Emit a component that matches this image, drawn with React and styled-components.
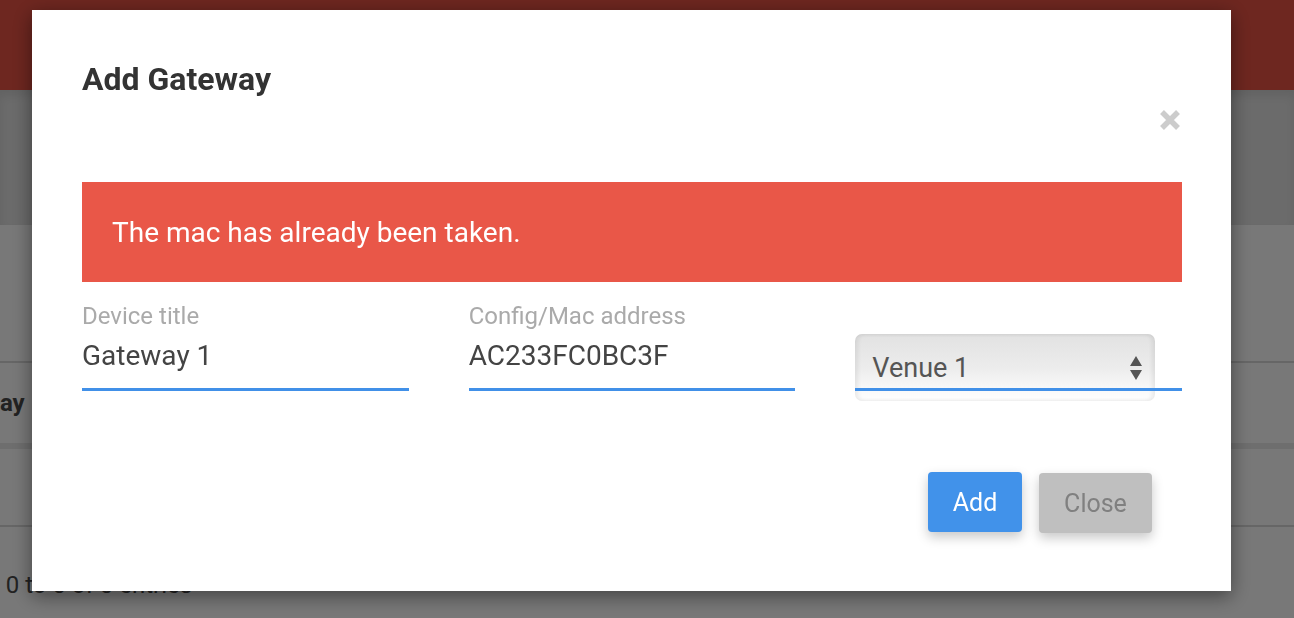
import React from 'react';
import styled, { createGlobalStyle } from 'styled-components';

const Global = createGlobalStyle`
  html, body { margin: 0; padding: 0; }
  body {
    font-family: Roboto, "Liberation Sans", sans-serif;
    background: #f0f0f0;
    width: 1294px;
    height: 618px;
    overflow: hidden;
  }
  * { box-sizing: border-box; }
`;

const Page = styled.div`
  display: flex;
  flex-direction: column;
  height: 618px;
  overflow: hidden;
`;

const Header = styled.header`
  height: 90px;
  flex-shrink: 0;
  background: #dc4e40;
`;

const Toolbar = styled.section`
  height: 135px;
  flex-shrink: 0;
  background: #d6d6d6;
  box-shadow: inset 0 6px 8px rgba(0, 0, 0, 0.08);
`;

const Table = styled.div`
  margin-top: 136px;
  display: flex;
  flex-direction: column;
`;

const HeadRow = styled.div`
  height: 88px;
  border-top: 2px solid #cdcdcd;
  border-bottom: 6px solid #dcdcdc;
  display: flex;
  align-items: center;
  font-size: 24px;
  font-weight: 700;
  color: #444;
`;

const HeadCell = styled.span`
  margin-left: ${p => p.$indent}px;
`;

const BodyRow = styled.div`
  height: 78px;
  border-bottom: 2px solid #cdcdcd;
`;

const Info = styled.div`
  margin-top: 44px;
  margin-left: ${p => p.$indent}px;
  font-size: 24px;
  line-height: 28px;
  color: #444;
`;

const Backdrop = styled.div`
  position: fixed;
  inset: 0;
  background: rgba(0, 0, 0, 0.5);
`;

const Modal = styled.div`
  position: fixed;
  left: 32px;
  top: 10px;
  width: 1199px;
  height: 581px;
  background: #fff;
  box-shadow: 0 5px 18px rgba(0, 0, 0, 0.45);
  padding: 0 49px 0 50px;
  display: flex;
  flex-direction: column;
`;

const ModalHeader = styled.div`
  height: 172px;
  display: flex;
  justify-content: space-between;
  align-items: flex-start;
`;

const Title = styled.h2`
  margin: 51px 0 0;
  font-size: 32px;
  line-height: 37px;
  font-weight: 700;
  color: #333;
`;

const CloseX = styled.button`
  margin: 99px 1px 0 0;
  width: 22px;
  height: 22px;
  padding: 0;
  border: none;
  background: none;
  color: #cccccc;
  display: flex;
  align-items: center;
  justify-content: center;
`;

const Alert = styled.div`
  height: 100px;
  background: #e95748;
  color: #fff;
  font-size: 28px;
  padding-left: 30px;
  display: flex;
  align-items: center;
`;

const Fields = styled.div`
  display: grid;
  grid-template-columns: repeat(3, 1fr);
  column-gap: 60px;
`;

const Field = styled.div`
  display: flex;
  flex-direction: column;
  padding-top: 20px;
`;

const Label = styled.label`
  font-size: 24px;
  line-height: 28px;
  color: #aaaaaa;
`;

const Input = styled.input`
  height: 61px;
  width: 100%;
  border: none;
  border-bottom: 3px solid #4190e8;
  padding: 0 0 7px;
  background: transparent;
  outline: none;
  font-family: Roboto, "Liberation Sans", sans-serif;
  font-size: 28px;
  color: #444;
`;

const SelectField = styled.div`
  position: relative;
  padding-top: 52px;
  &::after {
    content: '';
    position: absolute;
    left: 0;
    right: 0;
    top: 106px;
    height: 3px;
    background: #4190e8;
  }
`;

const SelectBox = styled.div`
  width: 300px;
  height: 67px;
  border-radius: 7px;
  background: linear-gradient(#e2e2e2 0%, #ececec 50%, #f4f4f4 70%, #ffffff 100%);
  box-shadow: inset 3px 0 4px rgba(0, 0, 0, 0.07), inset -3px 0 4px rgba(0, 0, 0, 0.07);
  display: flex;
  align-items: center;
  justify-content: space-between;
  padding: 0 12px 0 17px;
  font-size: 27px;
  color: #555;
`;

const Actions = styled.div`
  display: flex;
  justify-content: flex-end;
  align-items: flex-start;
  gap: 17px;
  margin-top: 71px;
  padding-right: 30px;
`;

const Button = styled.button`
  height: 60px;
  width: ${p => p.$w}px;
  margin-top: ${p => p.$offset || 0}px;
  border: none;
  border-radius: 4px;
  font-family: Roboto, "Liberation Sans", sans-serif;
  font-size: 25px;
  background: ${p => (p.$primary ? '#4192ea' : '#bfbfbf')};
  color: ${p => (p.$primary ? '#ffffff' : '#808080')};
  box-shadow: 0 5px 12px rgba(0, 0, 0, 0.22);
`;

export default function App() {
  return (
    <>
      <Global />
      <Page>
        <Header />
        <Toolbar />
        <Table>
          <HeadRow>
            <HeadCell $indent={-68}>Gateway ↑</HeadCell>
          </HeadRow>
          <BodyRow />
        </Table>
        <Info $indent={-92}>Showing 0 to 0 of 0 entries</Info>
      </Page>
      <Backdrop />
      <Modal>
        <ModalHeader>
          <Title>Add Gateway</Title>
          <CloseX aria-label="Close">
            <svg width="22" height="22" viewBox="0 0 22 22">
              <path d="M3 3 L19 19 M19 3 L3 19" stroke="currentColor" strokeWidth="5.5" strokeLinecap="butt" />
            </svg>
          </CloseX>
        </ModalHeader>
        <Alert>The mac has already been taken.</Alert>
        <Fields>
          <Field>
            <Label>Device title</Label>
            <Input defaultValue="Gateway 1" />
          </Field>
          <Field>
            <Label>Config/Mac address</Label>
            <Input defaultValue="AC233FC0BC3F" />
          </Field>
          <SelectField>
            <SelectBox>
              <span>Venue 1</span>
              <svg width="14" height="26" viewBox="0 0 14 26">
                <path d="M7 1 L13 11 L1 11 Z M1 15 L13 15 L7 25 Z" fill="#555" />
              </svg>
            </SelectBox>
          </SelectField>
        </Fields>
        <Actions>
          <Button $primary $w={94}>Add</Button>
          <Button $w={113} $offset={1}>Close</Button>
        </Actions>
      </Modal>
    </>
  );
}
